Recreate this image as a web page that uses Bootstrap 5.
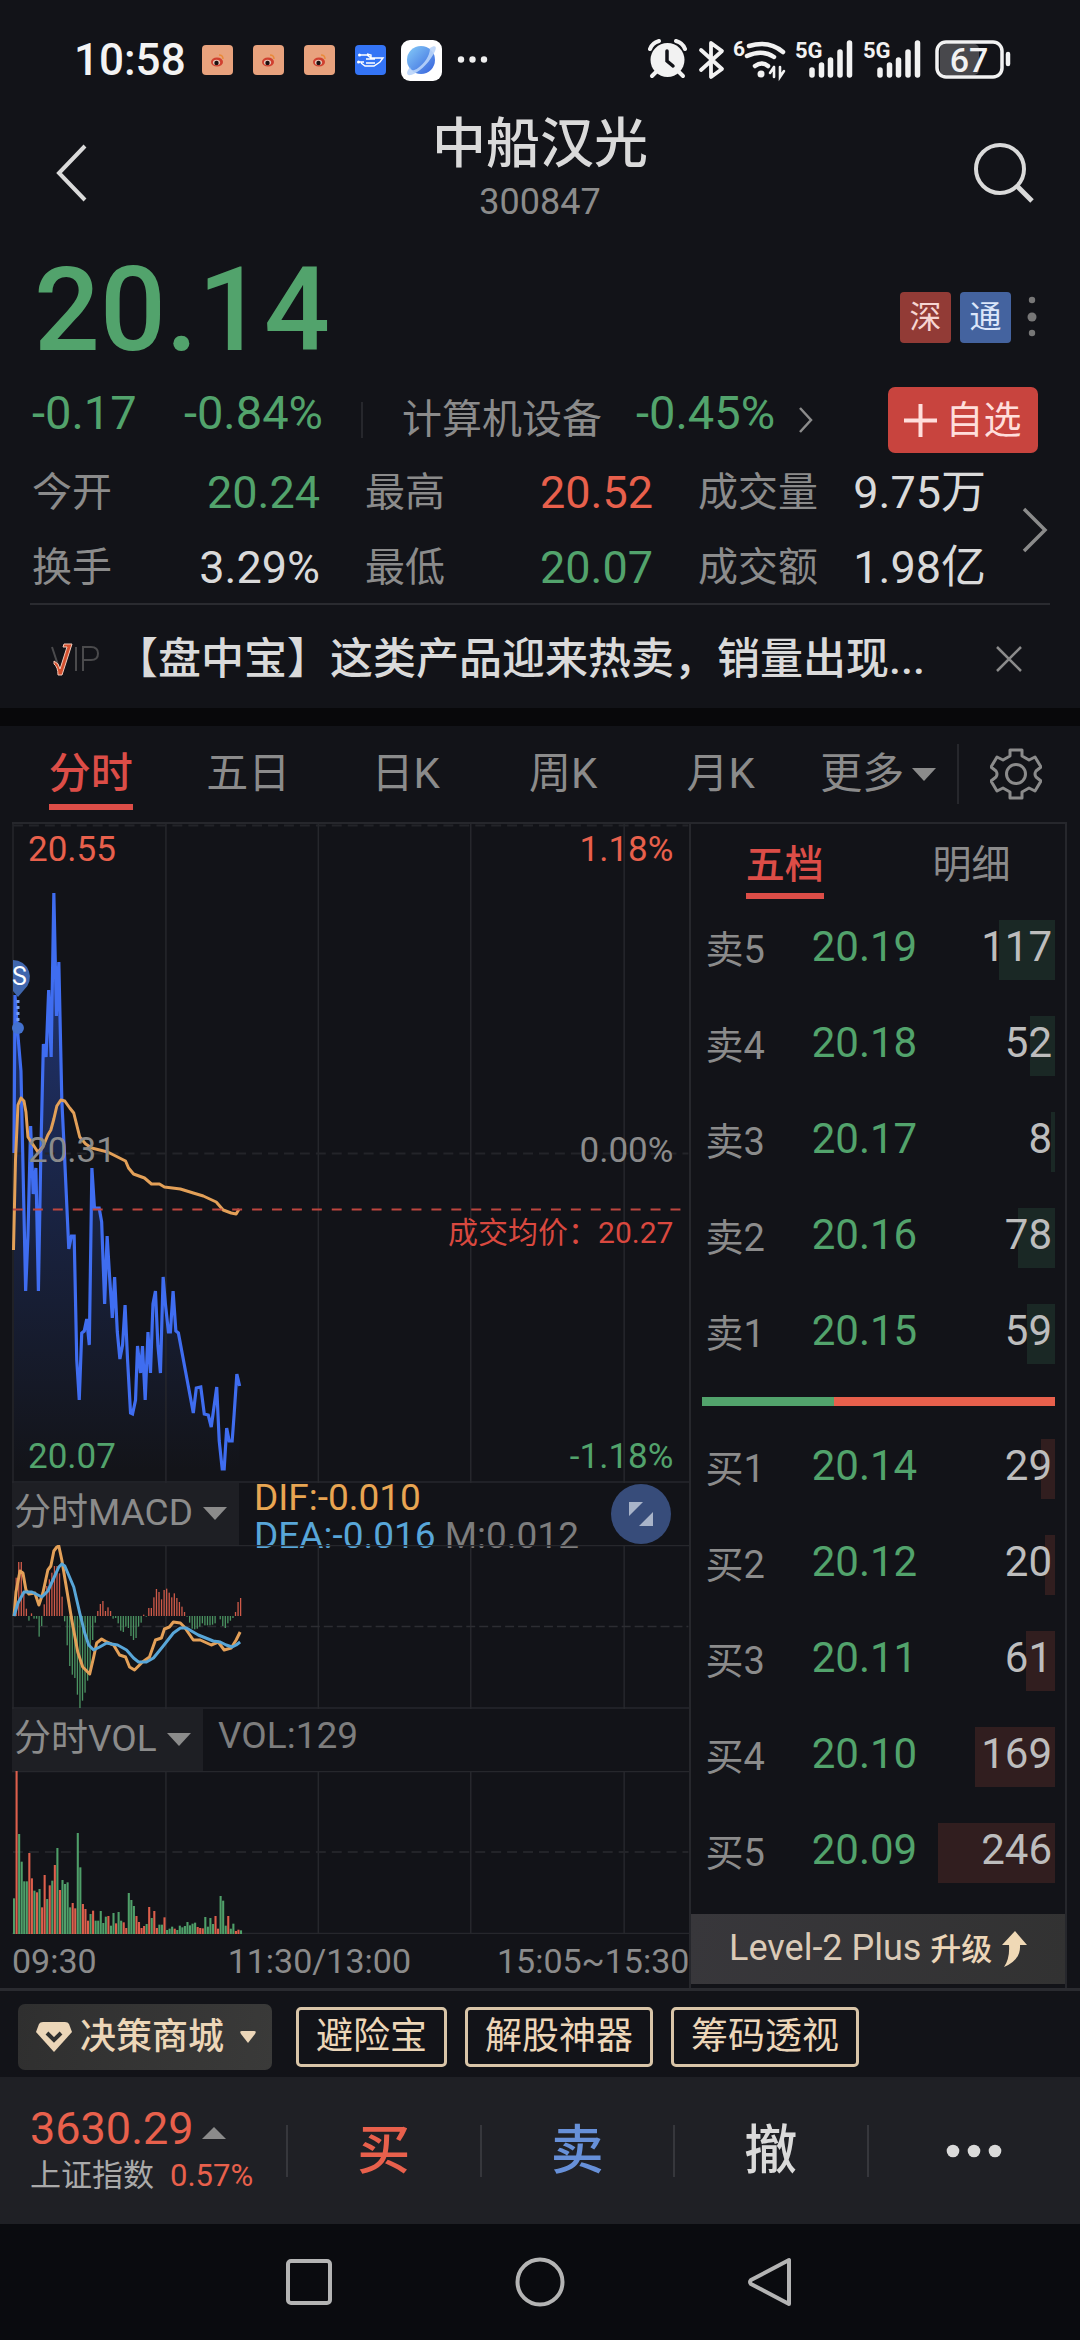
<!DOCTYPE html>
<html lang="zh-CN">
<head>
<meta charset="utf-8">
<meta name="viewport" content="width=device-width, initial-scale=1">
<title>中船汉光 300847</title>
<link href="https://cdn.jsdelivr.net/npm/bootstrap@5.3.0/dist/css/bootstrap.min.css" rel="stylesheet">
<style>
:root{--bg:#121318;--grey:#8b8b8b;--lite:#dadada;--up:#e8604c;--down:#52a36c;--act:#dc4d47;--line:#26272c;--gold:#ecd6b8}
body{background:var(--bg);color:var(--lite);font-family:Roboto,"Noto Sans CJK SC",sans-serif;font-size:40px;line-height:50px}
button,select{background:none;border:0;padding:0;color:inherit;font:inherit}
a{color:inherit;text-decoration:none}
svg{display:block;flex:none}
.t-grey{color:var(--grey)}.t-up{color:var(--up)}.t-down{color:var(--down)}
.num{font-size:45px}
/* system status */
.sysbar{height:107px;padding:13px 68px 0 74px}
.clock{font-size:44px;font-weight:500;color:#f3f3f3;margin-right:14px}
/* title */
.titlebar{padding:6px 46px 14px}
.titlebar h1{font-size:54px;line-height:64px;font-weight:500;margin:0}
.code-no{font-size:36px}
.side{width:60px;padding-top:6px}
.side.back svg{margin-left:10px}
/* quote */
.bigprice{font-size:116px;line-height:138px;font-weight:500;padding-left:34px}
.tagbox{width:51px;height:51px;border-radius:4px;font-size:32px;line-height:51px;text-align:center}
.tag-sz{background:#923b36;color:#f6d5d2}.tag-hk{background:#44639f;color:#dbe6fa}
.tags{padding:14px 41px 0 0}
.tags .tag-hk{margin-left:9px}
.chg{height:76px;padding:6px 42px 0 32px}
.chg .num{font-size:47px}
.chg .pair{width:291px;padding-bottom:14px}
.chg .vline{margin-left:38px}
.vline{width:2px;height:36px;background:var(--line)}
.industry{flex:1;padding-left:39px}
.industry .pct{padding-bottom:14px;margin-left:34px}
.addbtn{background:#c8443e;color:#ffdedb;border-radius:7px;height:66px;width:150px;font-size:38px;gap:8px}
.stats{padding:0 32px}
.statgrid{display:grid;grid-template-columns:1fr 1fr 1fr;column-gap:45px;margin:0 36px 0 0}
.statgrid > div{height:75px}
.statgrid dt{font-weight:400}.statgrid dd{margin:0}
.news{border-top:2px solid #2a2b30;margin:-2px 30px 0;height:105px;padding:4px 28px 0 20px}
.news .msg{font-size:43px;font-weight:500;flex:1;margin-left:15px}
.band{height:18px;background:#08080a}
/* period tabs */
.periods{height:96px;padding-left:12px;color:var(--grey);font-size:42px}
.periods .opt{flex:1 1 0}
.lbl{position:relative;display:inline-block}
.on{color:var(--act);font-weight:500}
.on .lbl::after{content:"";position:absolute;left:0;right:0;bottom:-11px;height:6px;background:var(--act)}
.gearbox{width:123px;padding-right:8px}
.gearbox .vline{height:60px}
/* chart area */
.panel{padding:0 13px 0 12px;border-bottom:3px solid #2a2b30}
.charts{flex:680 1 0;min-width:0;border-top:2px solid var(--line)}
.book{flex:375 1 0;min-width:0;border:2px solid var(--line);border-bottom:0;padding-bottom:4px}
.plot{position:relative}
.plot svg{width:100%}
.over{position:absolute;left:0;right:0;padding:0 16px;font-size:35px;line-height:40px}
.o-top{top:6px}.o-mid{top:307px}.o-bot{bottom:6px}
.o-avg{top:389px;font-size:30px;color:#d9483f}
.ind{background:#1e1f24;color:var(--grey);position:relative}
.ind select{appearance:none;font-size:37px;line-height:60px;padding:0 46px 0 2px;height:60px}
.ind svg{position:absolute;right:12px;top:24px;pointer-events:none}
.indrow{height:62px}
.indval{font-size:37px;line-height:38px;margin-top:-4px;padding-left:15px;color:#7d7d7d}
.volval{line-height:62px}
.c-dif{color:#e8a552}.c-dea{color:#58a6d8}
.zoomer{position:absolute;right:18px;top:1px;width:60px;height:60px;border-radius:50%;background:#374c7a}
.times{display:grid;grid-template-columns:215fr 187fr 278fr;font-size:34px;line-height:54px;color:var(--grey);white-space:nowrap}
.booktabs{height:78px;color:var(--grey);font-size:39px;padding-top:3px}
.booktabs .on .lbl::after{bottom:-9px}
.depth{--bs-table-bg:transparent;--bs-table-color:inherit;color:inherit;table-layout:fixed;margin:0}
.depth th,.depth td{height:96px;padding:0;vertical-align:middle;position:relative;font-weight:400}
.depth th{width:31%;color:var(--grey);font-size:38px;padding-left:3px}
.depth td{font-size:42px;padding-bottom:6px}
.depth .px{color:var(--down);width:38%}
.depth .qty{text-align:right;padding-right:3px;color:#bdbdbd}
.fillbar{position:absolute;right:0;top:18px;height:60px}
.sell .fillbar{background:#1a2825}.buy .fillbar{background:#311e1f}
.book .inner{padding:0 10px 0 11px}
.ratio{height:9px;margin:15px 0;background:#e8604c}
.ratio div{background:#52a36c}
.lv2{height:70px;margin-top:13px;background:linear-gradient(100deg,#38373b,#323232);color:#dbcbb7;font-size:36px;gap:9px}
.lv2 small{font-size:31px;font-weight:500;color:#ecd6b8}
/* tools */
.tools{height:86px;padding:13px 18px 0;font-size:37px}
.mall{background:linear-gradient(100deg,#2f2f2f,#3a3a39);color:var(--gold);border-radius:7px;height:66px;padding:0 16px 0 18px;margin-right:24px;font-weight:500;font-size:36px}
.chip{border:3px solid #d9c5a8;border-radius:5px;color:var(--gold);height:60px;padding:0 17px;margin:3px 18px 0 0;line-height:50px}
/* trade bar */
.trade{background:#1f2025;height:147px;padding-left:30px}
.trade .index{width:256px}
.trade .vline{height:52px;background:#36373c}
.trade .act{flex:192 1 0;font-size:53px;font-weight:500;line-height:60px}
.trade .act:last-child{flex-grow:212}
.c-sell{color:#6790d8}.c-index{color:#aaa}
.idx2{font-size:31px;line-height:44px}
.sysnav{background:#0a0b0f;height:116px}
.sysnav button{flex:0 0 231px}
</style>
</head>
<body>
<header>
  <div class="sysbar d-flex align-items-center">
    <span class="clock">10:58</span>
    <svg width="288" height="44" viewBox="200 38 288 44">
      <defs>
        <linearGradient id="ball" x1="0" y1="0" x2="1" y2="1"><stop offset="0" stop-color="#86ccf8"/><stop offset="1" stop-color="#3560dc"/></linearGradient>
        <g id="wb"><rect width="31" height="30" rx="4" fill="#e8a27d"/><ellipse cx="15" cy="17" rx="6" ry="4.500" fill="#d0402f"/><ellipse cx="14.500" cy="17.500" rx="3.600" ry="2.800" fill="#e9c0b2"/><circle cx="14.500" cy="18" r="2.200" fill="#1a1010"/><path d="M17 10q4 0 4 4" fill="none" stroke="#e98b3a" stroke-width="1.500"/></g>
      </defs>
      <use href="#wb" x="202" y="45"/><use href="#wb" x="253" y="45"/><use href="#wb" x="304" y="45"/>
      <rect x="355" y="45" width="31" height="30" rx="4" fill="#3474f5"/>
      <path d="M360 55h7l4 3h12l-3 4-6 4h-9l-4-3M359 62h5M366 59h9M366 63h9M371 58v-3l-4-1" fill="none" stroke="#fff" stroke-width="1.400"/>
      <circle cx="359.500" cy="55" r="1.500" fill="#fff"/><circle cx="358.500" cy="62" r="1.500" fill="#fff"/>
      <rect x="401" y="40" width="41" height="41" rx="9" fill="#fff"/>
      <circle cx="421" cy="60" r="14" fill="url(#ball)"/>
      <path d="M430 48c6-4 8-1 3 7-5 9-15 18-22 20-5 1-5-3-1-8 1 4 4 4 8 1 6-4 12-12 12-20z" fill="#b9d4fa" opacity=".9"/>
      <g fill="#eee"><circle cx="461" cy="59.500" r="3.200"/><circle cx="472.500" cy="59.500" r="3.200"/><circle cx="484" cy="59.500" r="3.200"/></g>
    </svg>
    <svg class="ms-auto" width="364" height="44" viewBox="646 38 364 44" fill="none" stroke="#f2f2f2" stroke-linecap="round">
      <circle cx="665.500" cy="60" r="17" fill="#f2f2f2" stroke="none"/>
      <path d="M648 49q2-6 9-8M683 49q-2-6-9-8" stroke-width="4"/><path d="M654 72l-4 4M677 72l4 4" stroke-width="4"/>
      <path d="M665 51v10l6 5" stroke="#121318" stroke-width="3.500"/>
      <path d="M699 50l21 19-11 8V43l11 8-21 19" stroke-width="3.800" stroke-linejoin="round"/>
      <path d="M747 46q20-6 34 6M745 56q15-7 27 1M753 66q7-5 13 0" stroke-width="4.500"/>
      <circle cx="759" cy="74" r="3.500" fill="#f2f2f2" stroke="none"/>
      <path d="M772 67v10M772 67l-4 6M778 67v10l4-6" stroke-width="2.600"/>
      <g fill="#f2f2f2" stroke="none" font-family="Roboto" font-weight="700"><text x="731" y="56" font-size="21">6</text><text x="793" y="58" font-size="22">5G</text><text x="861" y="58" font-size="22">5G</text></g>
      <g stroke-width="5.500"><path id="sig" d="M810 70v5M819.500 65v10M828.500 60v15M838 52v23M847.500 43v32"/><use href="#sig" x="68"/></g>
      <rect x="938" y="44" width="39" height="31" rx="5" fill="#48484c" stroke="none"/>
      <rect x="935" y="42" width="65" height="35" rx="9" stroke-width="3.500"/>
      <path d="M1006 54v10" stroke-width="4.500"/>
      <text x="967" y="72" text-anchor="middle" font-family="Roboto" font-size="34" font-weight="500" fill="#f2f2f2" stroke="none">67</text>
    </svg>
  </div>
  <div class="titlebar d-flex align-items-center justify-content-between">
    <button class="side back" aria-label="返回"><svg width="32" height="58" viewBox="0 0 32 58" fill="none" stroke="#dadada" stroke-width="4"><path d="M29 2L3 29l26 27"/></svg></button>
    <div class="text-center"><h1>中船汉光</h1><div class="code-no t-grey">300847</div></div>
    <button class="side" aria-label="搜索"><svg width="60" height="60" viewBox="0 0 60 60" fill="none" stroke="#dadada" stroke-width="4"><circle cx="26" cy="26" r="24"/><path d="M43 43l15 15" stroke-width="5"/></svg></button>
  </div>
</header>

<main>
  <section class="d-flex justify-content-between align-items-center">
    <div class="bigprice t-down">20.14</div>
    <div class="tags d-flex align-items-center">
      <span class="tagbox tag-sz">深</span><span class="tagbox tag-hk">通</span>
      <svg width="28" height="44" viewBox="0 0 28 44" fill="#777"><circle cx="21" cy="5" r="3.200"/><circle cx="21" cy="22" r="4.500"/><circle cx="21" cy="38" r="3.200"/></svg>
    </div>
  </section>
  <section class="chg d-flex align-items-center">
    <div class="pair d-flex justify-content-between num t-down"><span>-0.17</span><span>-0.84%</span></div>
    <div class="vline"></div>
    <a href="#" class="industry d-flex align-items-center"><span class="t-grey">计算机设备</span><span class="pct num t-down">-0.45%</span>
      <svg class="ms-4" width="14" height="26" viewBox="0 0 14 26" fill="none" stroke="#8b8b8b" stroke-width="2.500"><path d="M1 1l11 12L1 25"/></svg></a>
    <button class="addbtn d-flex align-items-center justify-content-center"><svg width="33" height="33" viewBox="0 0 33 33" stroke="#ffdedb" stroke-width="4"><path d="M0 16.500h33M16.500 0v33"/></svg>自选</button>
  </section>
  <section class="stats d-flex align-items-center">
    <dl class="statgrid flex-fill">
      <div class="d-flex align-items-center justify-content-between"><dt class="t-grey">今开</dt><dd class="num t-down">20.24</dd></div>
      <div class="d-flex align-items-center justify-content-between"><dt class="t-grey">最高</dt><dd class="num t-up">20.52</dd></div>
      <div class="d-flex align-items-center justify-content-between"><dt class="t-grey">成交量</dt><dd class="num">9.75万</dd></div>
      <div class="d-flex align-items-center justify-content-between"><dt class="t-grey">换手</dt><dd class="num">3.29%</dd></div>
      <div class="d-flex align-items-center justify-content-between"><dt class="t-grey">最低</dt><dd class="num t-down">20.07</dd></div>
      <div class="d-flex align-items-center justify-content-between"><dt class="t-grey">成交额</dt><dd class="num">1.98亿</dd></div>
    </dl>
    <svg width="26" height="46" viewBox="0 0 26 46" fill="none" stroke="#8b8b8b" stroke-width="3.500"><path d="M2 2l21 21L2 44"/></svg>
  </section>
  <section class="news d-flex align-items-center">
    <svg width="50" height="34" viewBox="0 0 50 34" fill="none"><g stroke="#4a4a4c" stroke-width="2"><path d="M2 5l8 24L20 5M26 5v24M33 29V5h8q7 0 7 6.500T41 18h-8"/></g><path d="M4 19q5 2 6 8L17 5h-4l1-3h8l-10 31H8Q8 25 4 22z" fill="#d4502f" stroke="#f3c9b8" stroke-width="1"/></svg>
    <a href="#" class="msg text-nowrap">【盘中宝】这类产品迎来热卖，销量出现...</a>
    <button aria-label="关闭"><svg width="26" height="26" viewBox="0 0 26 26" stroke="#8b8b8b" stroke-width="2.500"><path d="M1 1l24 24M25 1L1 25"/></svg></button>
  </section>
  <div class="band"></div>
  <nav class="periods d-flex align-items-center">
    <button class="opt on"><span class="lbl">分时</span></button><button class="opt">五日</button><button class="opt">日K</button><button class="opt">周K</button><button class="opt">月K</button>
    <button class="opt d-flex align-items-center justify-content-center text-nowrap">更多<svg class="ms-2" width="24" height="13" viewBox="0 0 24 13" fill="#8b8b8b"><path d="M0 0h24L12 13z"/></svg></button>
    <div class="gearbox d-flex align-items-center"><div class="vline"></div>
      <button class="mx-auto" aria-label="设置"><svg width="52" height="52" viewBox="0 0 52 52" fill="none" stroke="#8b8b8b" stroke-width="3" stroke-linejoin="round"><circle cx="26" cy="26" r="9.500"/><path d="M20 2h12v6l7 4 6-3 6 10-5 4q-2 3 0 6l5 4-6 10-6-3-7 4v6H20v-6l-7-4-6 3L1 33l5-4q2-3 0-6l-5-4L7 9l6 3 7-4z"/></svg></button></div>
  </nav>

  <section class="panel d-flex">
    <div class="charts">
      <div class="plot">
        <svg height="659" viewBox="12 824 680 659" preserveAspectRatio="none" fill="none">
          <defs><linearGradient id="area" x1="0" y1="893" x2="0" y2="1470" gradientUnits="userSpaceOnUse"><stop offset="0" stop-color="#22387c"/><stop offset=".5" stop-color="#1a2547"/><stop offset="1" stop-color="#131419"/></linearGradient></defs>
          <path id="fillArea" fill="url(#area)"/>
          <path d="M13 824v659M166.500 824v659M319.500 824v659M472.500 824v659M626.500 824v659M12 1482h680" stroke="#26272c" stroke-width="1.500"/>
          <path d="M13 825.500h678M13 1153.500h678" stroke="#232429" stroke-width="2" stroke-dasharray="10 6"/>
          <polyline id="price" stroke="#3f6df0" stroke-width="3.200"/>
          <polyline id="avg" stroke="#e3a058" stroke-width="3" stroke-linejoin="round"/>
          <path d="M13 1209.500h672" stroke="#bd463f" stroke-width="2" stroke-dasharray="10 10"/>
          <path d="M13 960a17 17 0 0 1 11 30l-6 7-5-6z" fill="#4067ae"/>
          <path d="M18 1000v22" stroke="#7ba0ea" stroke-width="3" stroke-dasharray="3 3"/><circle cx="18" cy="1028" r="6" fill="#4472cf"/>
          <text x="12" y="985" font-size="25" fill="#fff" font-family="Roboto">S</text>
        </svg>
        <div class="over o-top d-flex justify-content-between t-up"><span>20.55</span><span>1.18%</span></div>
        <div class="over o-mid d-flex justify-content-between t-grey"><span>20.31</span><span>0.00%</span></div>
        <div class="over o-avg text-end">成交均价：20.27</div>
        <div class="over o-bot d-flex justify-content-between t-down"><span>20.07</span><span>-1.18%</span></div>
      </div>
      <div class="indrow d-flex position-relative">
        <div class="ind"><select aria-label="副图指标一"><option>分时MACD</option></select><svg width="24" height="13" viewBox="0 0 24 13" fill="#8b8b8b"><path d="M0 0h24L12 13z"/></svg></div>
        <div class="indval"><div class="c-dif">DIF:-0.010</div><div><span class="c-dea">DEA:-0.016</span> M:0.012</div></div>
        <button class="zoomer" aria-label="全屏"><svg class="mx-auto" width="26" height="26" viewBox="0 0 26 26" fill="#a9b4c9"><path d="M1 1h14L1 15zM25 25H11l14-14z"/></svg></button>
      </div>
      <div class="plot">
        <svg height="164" viewBox="12 1545 680 164" preserveAspectRatio="none" fill="none">
          <path d="M13 1545v164M166.500 1545v164M319.500 1545v164M472.500 1545v164M626.500 1545v164M12 1545.500h680M12 1708h680" stroke="#26272c" stroke-width="1.500"/>
          <path d="M13 1626.500h678" stroke="#2c2d32" stroke-width="1.500" stroke-dasharray="9 4"/>
          <g id="macdBars"></g>
          <polyline id="dif" stroke="#e3a058" stroke-width="3" stroke-linejoin="round"/><polyline id="dea" stroke="#58a6d8" stroke-width="3" stroke-linejoin="round"/>
        </svg>
      </div>
      <div class="indrow d-flex">
        <div class="ind"><select aria-label="副图指标二"><option>分时VOL</option></select><svg width="24" height="13" viewBox="0 0 24 13" fill="#8b8b8b"><path d="M0 0h24L12 13z"/></svg></div>
        <div class="indval volval t-grey">VOL:129</div>
      </div>
      <div class="plot">
        <svg height="163" viewBox="12 1771 680 163" preserveAspectRatio="none" fill="none">
          <path d="M166.500 1770v164M319.500 1770v164M472.500 1770v164M626.500 1770v164M12 1771.500h680M12 1933.500h680" stroke="#26272c" stroke-width="1.500"/>
          <path d="M13 1852h678" stroke="#232429" stroke-width="2" stroke-dasharray="10 6"/>
          <g id="volBars"></g>
        </svg>
      </div>
      <div class="times"><span>09:30</span><span class="text-center">11:30/13:00</span><span class="text-end">15:05~15:30</span></div>
    </div>

    <aside class="book">
      <div class="booktabs d-flex align-items-center"><button class="on flex-fill w-50"><span class="lbl">五档</span></button><button class="flex-fill w-50">明细</button></div>
      <div class="inner">
        <table class="table table-borderless depth sell"><tbody id="sells"></tbody></table>
        <div class="ratio"><div class="h-100" style="width:37.3%"></div></div>
        <table class="table table-borderless depth buy"><tbody id="buys"></tbody></table>
      </div>
      <a href="#" class="lv2 d-flex align-items-center justify-content-center text-nowrap"><span>Level-2 Plus <small>升级</small></span><svg width="26" height="36" viewBox="0 0 26 36" fill="#f0d9b6"><path d="M14 0l12 14h-7q1 15-16 22 6-9 5-22H1z"/></svg></a>
    </aside>
  </section>

  <section class="tools d-flex align-items-start">
    <button class="mall d-flex align-items-center text-nowrap"><svg width="36" height="30" viewBox="0 0 36 30"><path d="M7 0h22q3 0 4 2l3 8-18 20L0 10 3 2q1-2 4-2z" fill="#ecd6b8"/><path d="M11 11l7 7 7-7" fill="none" stroke="#30302f" stroke-width="4"/></svg><span class="ms-2 me-3">决策商城</span><svg width="16" height="12" viewBox="0 0 16 12" fill="#ecd6b8"><path d="M2 0h12q3 0 1 3l-7 9-7-9Q-1 0 2 0z"/></svg></button>
    <button class="chip">避险宝</button><button class="chip">解股神器</button><button class="chip">筹码透视</button>
  </section>
</main>

<footer>
  <div class="trade d-flex align-items-center">
    <a href="#" class="index"><span class="d-flex align-items-center"><span class="num t-up">3630.29</span><svg class="ms-2 mt-2" width="24" height="12" viewBox="0 0 24 12" fill="#8b8b8b"><path d="M0 12h24L12 0z"/></svg></span>
      <span class="d-flex idx2"><span class="c-index">上证指数</span><span class="t-up ms-3">0.57%</span></span></a>
    <span class="vline"></span><button class="act t-up">买</button><span class="vline"></span><button class="act c-sell">卖</button><span class="vline"></span><button class="act">撤</button><span class="vline"></span>
    <button class="act" aria-label="更多操作"><svg class="mx-auto" width="56" height="14" viewBox="0 0 56 14" fill="#dadada"><circle cx="7" cy="7" r="6.300"/><circle cx="28" cy="7" r="6.300"/><circle cx="49" cy="7" r="6.300"/></svg></button>
  </div>
  <div class="sysnav d-flex justify-content-center align-items-center">
    <button aria-label="最近任务"><svg class="mx-auto" width="50" height="50" viewBox="0 0 50 50" fill="none" stroke="#b4b4b4" stroke-width="4"><rect x="4" y="4" width="42" height="42" rx="3"/></svg></button>
    <button aria-label="主屏幕"><svg class="mx-auto" width="50" height="50" viewBox="0 0 50 50" fill="none" stroke="#b4b4b4" stroke-width="4"><circle cx="25" cy="25" r="22.500"/></svg></button>
    <button aria-label="返回上一级"><svg class="mx-auto" width="50" height="50" viewBox="0 0 50 50" fill="none" stroke="#b4b4b4" stroke-width="4" stroke-linejoin="round"><path d="M43 3v44L5 27q-2-2 0-4z"/></svg></button>
  </div>
</footer>

<script>
const $ = id => document.getElementById(id);
const price = "14,1153 15,995 17.5,1030 21,1071 25.7,1291 28,1236 30.7,1126 33.3,1194 36,1168 38.5,1291 41,1150 43.5,1044 46.2,1057 48.8,990 51.3,1057 54,893 56.6,1016 59,962 62,1100 64.7,1155 69,1249 71.7,1236 74.4,1236 77,1360 79.5,1400 82,1333 84.5,1331 87,1319 89.6,1345 92.2,1168 94.8,1208 99.5,1208 102,1222 105,1304 107.5,1236 110,1277 112.7,1318 115,1277 117.7,1332 120.3,1359 123,1345 125.5,1305 128,1360 131,1413 133,1414 136,1400 138,1346 141,1373 143,1346 145.7,1400 148.5,1332 151,1373 153.5,1304 156,1291 158.5,1346 161,1373 163.7,1277 166,1304 169,1332 171,1332 173.7,1291 176.5,1331 179,1333 194,1413 197,1388 201.5,1387 205,1414 209,1415 212,1427 217.5,1387 220,1441 223,1469 225,1469 227.5,1428 230,1441 233,1441 235,1414 237.7,1374 240.5,1386";
$("price").setAttribute("points", price);
$("fillArea").setAttribute("d", "M14 1482L" + price.replace(/ /g, "L") + "L240.5 1482Z");
$("avg").setAttribute("points", "13.5,1250 15.5,1160 18,1105 21,1098 24,1101 26,1112 28,1137 32,1143 38,1152 43,1147 48,1135 51,1130 54,1119 57,1106 61,1100 65,1101 70,1108 74,1113 77,1125 80,1137 86,1144 92,1148 108,1152 126,1161 129,1168 134,1174 145,1178 152,1184 160,1184 165,1187 181,1189 194,1193 204,1196 217,1202 224,1210 232,1213 237,1214 240,1209");
$("dif").setAttribute("points", "14,1616 16,1592 20,1571 23,1573 26,1590 29,1594 35,1593 39,1605 43,1593 48,1570 51,1566 54,1551 57,1547 59,1546 62,1560 67,1590 72,1620 78,1652 83,1667 90,1674 94,1657 97,1643 102,1639 107,1642 114,1645 120,1655 126,1657 130,1667 135,1670 143,1662 150,1657 156,1640 162,1638 165,1629 170,1627 174,1622 181,1623 185,1627 194,1640 201,1640 212,1645 219,1642 225,1650 232,1648 237,1640 241,1632");
$("dea").setAttribute("points", "14,1616 18,1603 24,1592 32,1592 38,1595 42,1597 48,1591 54,1578 59,1567 62,1564 65,1566 68,1573 74,1587 80,1613 85,1633 89,1645 94,1650 100,1647 107,1643 112,1644 118,1645 127,1650 134,1658 139,1662 147,1662 154,1658 163,1647 174,1633 181,1628 187,1628 199,1635 214,1641 221,1642 227,1645 233,1647 237,1645 241,1642");
const macd = [0,115,162,162,70,22,-14,8,-8,-8,-62,-30,35,90,110,130,150,150,128,58,-16,-88,-150,-176,-186,-236,-276,-254,-230,-194,-170,-72,-20,15,36,45,15,26,15,-8,-6,-22,-44,-48,-32,-36,-60,-72,-66,-32,-20,4,-2,24,24,56,81,72,50,78,82,70,56,68,54,42,28,12,-2,-20,-38,-40,-38,-32,-22,-28,-28,-28,-26,-22,0,-10,-30,-36,-22,-14,-6,12,42,54];
$("macdBars").innerHTML = macd.map((v, i) => {
  const h = Math.abs(v) / 3;
  return `<rect x="${13 + i * 2.56}" y="${v > 0 ? 1616 - h : 1616}" width="1.3" height="${h}" fill="${v > 0 ? "#cf5a49" : "#4b9462"}"/>`;
}).join("");
const vol = "g107 r492 g300 g217 g158 g158 r243 r167 g130 r125 g135 r80 r177 g105 r146 g160 r207 g258 r132 g162 g150 g155 g80 r93 r77 g303 g200 r90 r75 r40 g60 r70 g40 g40 g69 g33 g52 r54 g25 g63 r32 g66 g40 r35 r18 g123 g102 g84 r54 r36 r18 r24 g30 r81 g48 r69 r18 g28 g28 r50 g12 g16 g22 r16 g12 g25 g20 g24 g36 g26 g31 g34 r21 r18 r17 g51 g22 g48 g30 r54 r16 g114 g100 g25 r54 g16 g31 r9 r13 g11".split(" ");
$("volBars").innerHTML = vol.map((s, i) => {
  const h = s.slice(1) / 3;
  return `<rect x="${13 + i * 2.56}" y="${1934 - h}" width="2.1" height="${h}" fill="${s[0] === "r" ? "#dd5f4c" : "#4f9f69"}"/>`;
}).join("");
const row = ([n, p, q]) => `<tr><th scope="row">${n}</th><td class="px">${p}</td><td class="qty"><span class="fillbar" style="width:${Math.max(4, q * 0.476)}px"></span><span class="position-relative">${q}</span></td></tr>`;
$("sells").innerHTML = [["卖5","20.19",117],["卖4","20.18",52],["卖3","20.17",8],["卖2","20.16",78],["卖1","20.15",59]].map(row).join("");
$("buys").innerHTML = [["买1","20.14",29],["买2","20.12",20],["买3","20.11",61],["买4","20.10",169],["买5","20.09",246]].map(row).join("");
</script>
<script src="https://cdn.jsdelivr.net/npm/bootstrap@5.3.0/dist/js/bootstrap.bundle.min.js"></script>
</body>
</html>
